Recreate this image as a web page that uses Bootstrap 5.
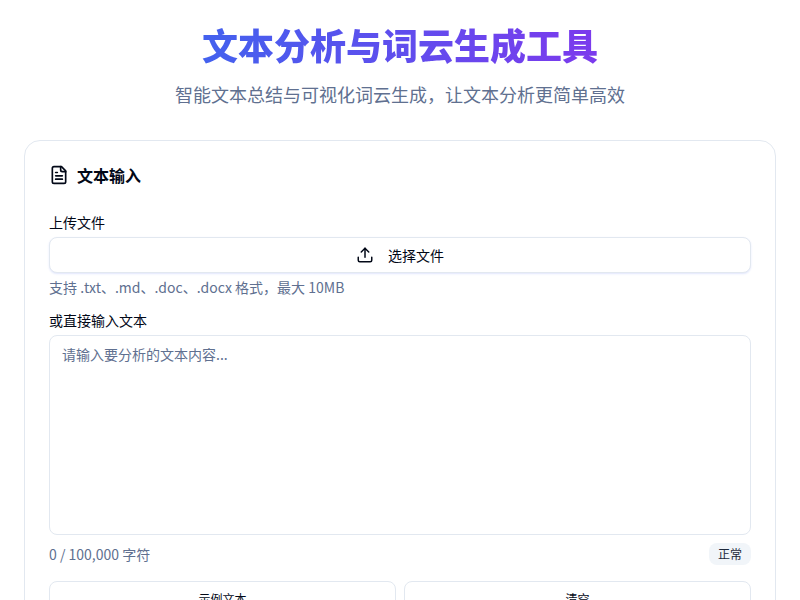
<!DOCTYPE html>
<html lang="zh-CN">
<head>
<meta charset="utf-8">
<title>文本分析与词云生成工具</title>
<link href="https://cdn.jsdelivr.net/npm/bootstrap@5.3.0/dist/css/bootstrap.min.css" rel="stylesheet">
<style>
html,body{height:600px;overflow:hidden}
body{font-family:"Noto Sans CJK SC",sans-serif;background:#fff;color:#020817;font-size:14px}
.page-wrap{padding:24px}
.hero-title{font-size:36px;line-height:40px;font-weight:800;margin:0 0 16px;display:inline-block;background:linear-gradient(90deg,#4361ee,#7c3aed);-webkit-background-clip:text;background-clip:text;color:transparent}
.hero-sub{font-size:18px;line-height:28px;color:#607090;margin:0}
.hero{margin-bottom:32px;height:84px}
.panel{border:1px solid #e2e8f0;border-radius:16px;padding:24px;background:#fff}
.panel-head{font-size:16px;line-height:20px;font-weight:600;gap:8px;margin-bottom:27px;height:20px}
.field-label{font-size:14px;line-height:20px;margin-bottom:5px;display:block;color:#020817}
.file-btn{height:36px;border:1px solid #e2e8f0;border-radius:8px;background:#fff;font-size:14px;color:#020817;gap:14px;width:100%;box-shadow:0 1px 2px rgba(67,97,238,.16)}
.hint{font-size:14px;line-height:20px;color:#607090;margin-top:4px;margin-bottom:13px}
.text-box{height:200px;border:1px solid #e2e8f0;border-radius:8px;padding:8px 12px;font-size:14px;line-height:20px;resize:none;width:100%;display:block;color:#020817;outline:0}
.text-box::placeholder{color:#607090;opacity:1}
.count-row{margin-top:8px;height:22px;margin-bottom:16px}
.count{font-size:14px;color:#607090;line-height:24px}
.state{font-size:12px;line-height:16px;padding:3px 9px;background:#f1f5f9;border-radius:8px;color:#1e293b}
.act-btn{height:36px;border:1px solid #e2e8f0;border-radius:8px;background:#fff;font-size:12px;color:#020817;flex:1 1 0;padding:0}
</style>
</head>
<body>
<div class="page-wrap">
  <header class="hero text-center">
    <h1 class="hero-title">文本分析与词云生成工具</h1>
    <p class="hero-sub">智能文本总结与可视化词云生成，让文本分析更简单高效</p>
  </header>
  <section class="panel">
    <div class="panel-head d-flex align-items-center">
      <svg width="20" height="20" viewBox="0 0 24 24" fill="none" stroke="#020817" stroke-width="2" stroke-linecap="round" stroke-linejoin="round"><path d="M15 2H6a2 2 0 0 0-2 2v16a2 2 0 0 0 2 2h12a2 2 0 0 0 2-2V7Z"/><path d="M14 2v4a2 2 0 0 0 2 2h4"/><path d="M10 9H8"/><path d="M16 13H8"/><path d="M16 17H8"/></svg>
      <span>文本输入</span>
    </div>
    <label class="field-label">上传文件</label>
    <button type="button" class="file-btn d-flex align-items-center justify-content-center">
      <svg width="18" height="18" viewBox="0 0 24 24" fill="none" stroke="#020817" stroke-width="2" stroke-linecap="round" stroke-linejoin="round"><path d="M21 15v4a2 2 0 0 1-2 2H5a2 2 0 0 1-2-2v-4"/><path d="M17 8l-5-5-5 5"/><path d="M12 3v12"/></svg>
      <span>选择文件</span>
    </button>
    <p class="hint">支持 .txt、.md、.doc、.docx 格式，最大 10MB</p>
    <label class="field-label">或直接输入文本</label>
    <textarea class="text-box" placeholder="请输入要分析的文本内容..."></textarea>
    <div class="count-row d-flex justify-content-between align-items-center">
      <span class="count">0 / 100,000 字符</span>
      <span class="state">正常</span>
    </div>
    <div class="d-flex gap-2">
      <button type="button" class="act-btn">示例文本</button>
      <button type="button" class="act-btn">清空</button>
    </div>
  </section>
</div>
</body>
</html>
